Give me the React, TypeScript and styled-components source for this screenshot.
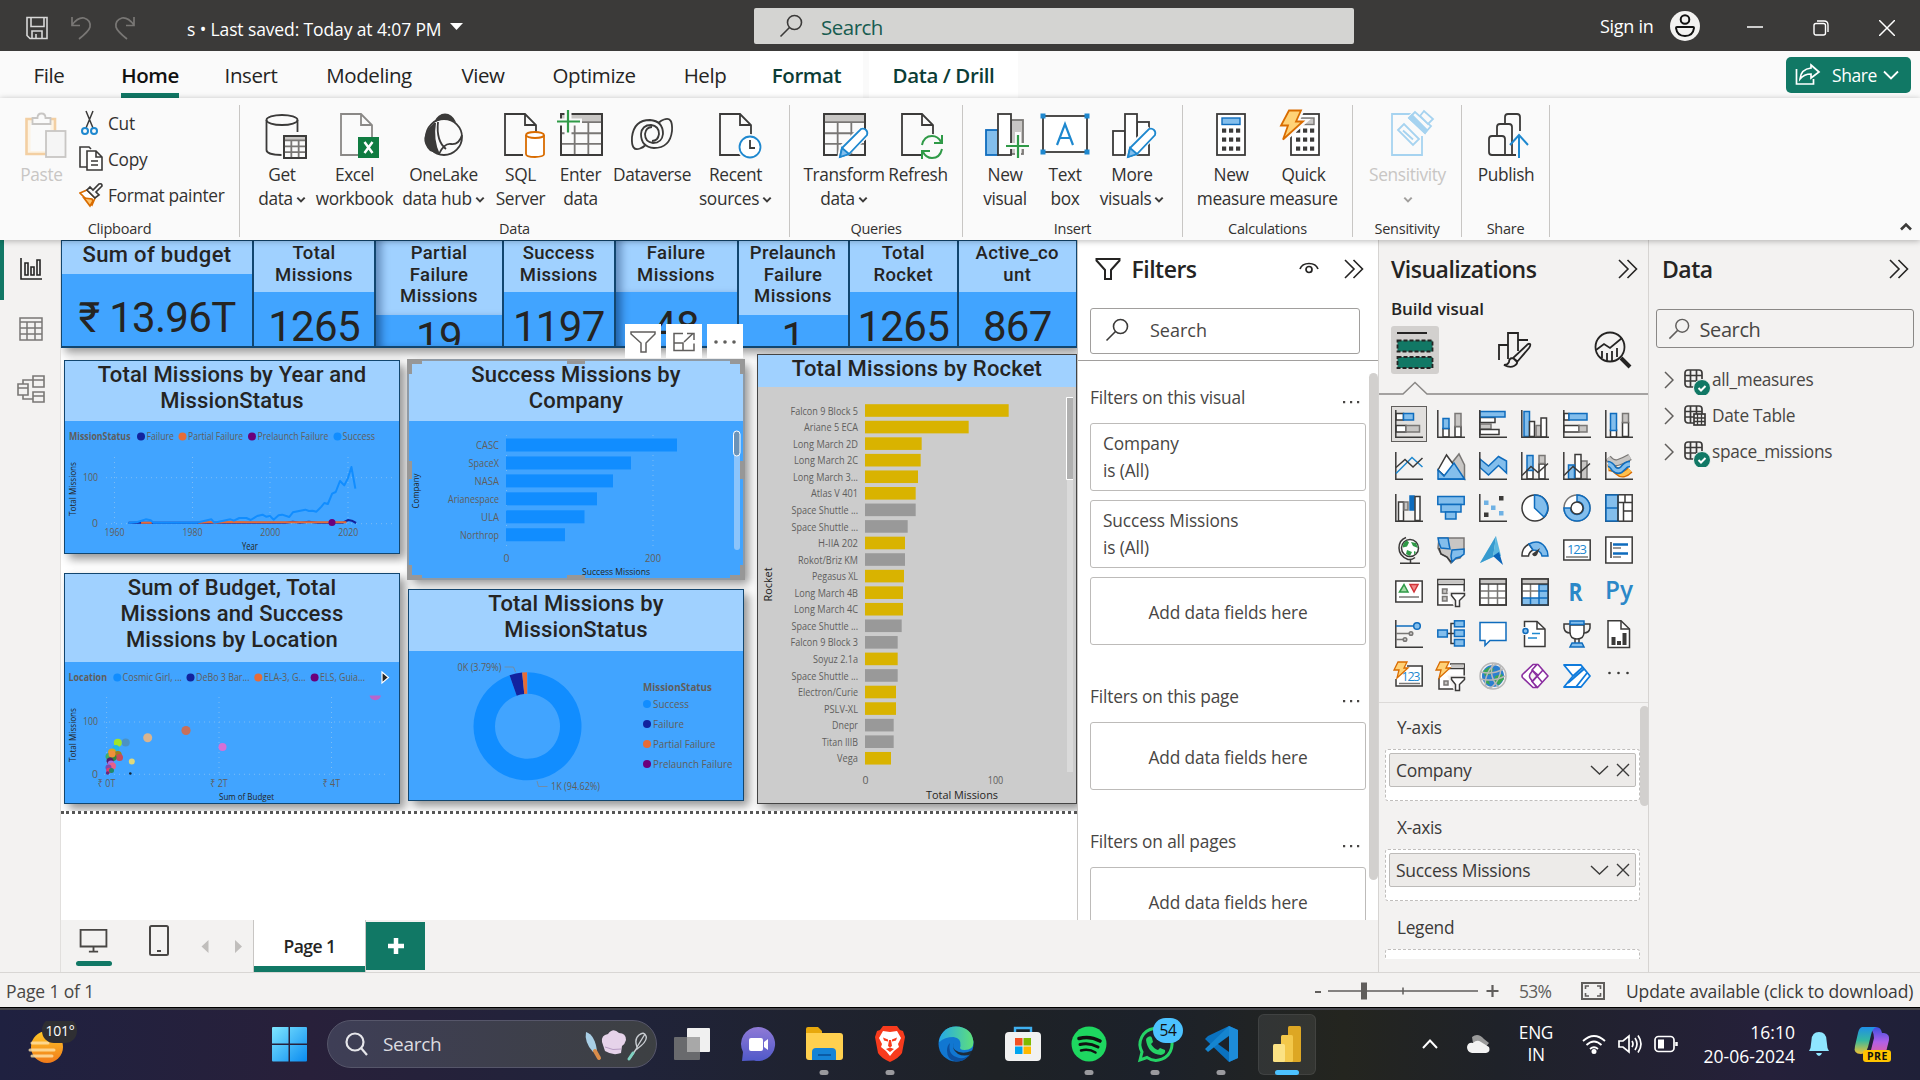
import React from "react";
import styled, { createGlobalStyle, css } from "styled-components";

const ui = `"Open Sans", "Noto Sans", sans-serif`;
const din = `Roboto, "Liberation Sans", sans-serif`;
const DK = "#3b3a39";
const BL = "#0f6cbd";
const LB = "#83beec";
const GR = "#797775";
const LG = "#c8c6c4";
const GREEN = "#117865";

const Global = createGlobalStyle`
  * { box-sizing: border-box; }
  html, body { margin: 0; padding: 0; overflow: hidden; background: #f3f2f1; }
  body { font-family: ${ui}; color: #323130; font-stretch: 92%; }
  svg { display: block; flex: none; }
`;

const Screen = styled.div`
  width: 1920px; height: 1080px; display: flex; flex-direction: column; overflow: hidden; background: #f3f2f1;
`;

/* ---------- title bar ---------- */
const TitleBar = styled.header`
  height: 51px; flex: none; background: #3b3a39; display: flex; align-items: center; color: #fff;
`;
const TitleLeft = styled.div`
  width: 754px; display: flex; align-items: center; padding: 4px 0 0 25px; font-size: 17.5px; letter-spacing: -0.12px; white-space: pre;
`;
const TitleText = styled.span`padding-top: 3px;`;
const QuickIcons = styled.div`display: flex; gap: 20px; width: 162px;`;
const TitleSearch = styled.div`
  width: 600px; height: 36px; background: #d4d4d2; border-radius: 2px; display: flex; align-items: center;
  padding-left: 25px; gap: 18px; color: #185c50; font-size: 20.5px; letter-spacing: -0.5px;
  span { padding-top: 2px; }
`;
const TitleRight = styled.div`
  flex: 1; display: flex; align-items: center; padding-left: 246px; font-size: 18px; letter-spacing: -0.3px;
`;
const SignIn = styled.span`width: 70px;`;
const WinButtons = styled.div`display: flex; gap: 50px; padding: 4px 0 0 47px;`;

/* ---------- ribbon ---------- */
const Tabs = styled.nav`
  height: 47px; flex: none; background: #fafafa; display: flex; position: relative; font-size: 20.5px; letter-spacing: -0.4px; color: #252423;
`;
const Tab = styled.div<{ $w: number; $on?: boolean; $ctx?: boolean; $gap?: number }>`
  width: ${p => p.$w}px; margin-left: ${p => p.$gap || 0}px; display: flex; justify-content: center; height: 47px; line-height: 48px; white-space: nowrap;
  ${p => p.$on && css`font-weight: 600; color: #111; span { border-bottom: 5px solid ${GREEN}; }`}
  ${p => p.$ctx && css`font-weight: 600; color: #0b3d36; background: #fff;`}
`;
const ShareButton = styled.div`
  margin: 6px 9px 5px auto; width: 125px; height: 36px; background: ${GREEN}; color: #fff; border-radius: 5px;
  display: flex; align-items: center; font-size: 17.5px; padding-left: 9px; gap: 11px;
  svg:last-child { margin-left: -5px; }
`;
const RibbonBar = styled.div`
  height: 142px; flex: none; background: #fafafa; display: flex; position: relative; z-index: 5; box-shadow: 0 1px 6px rgba(0,0,0,.28);
`;
const Group = styled.section<{ $w: number }>`
  width: ${p => p.$w}px; height: 132px; margin-top: 7px; border-right: 1px solid #c8c6c4; display: flex; flex-direction: column;
`;
const Items = styled.div<{ $pl: number }>`display: flex; flex: none; height: 114px; padding-left: ${p => p.$pl}px;`;
const GroupName = styled.div`flex: none; font-size: 14.5px; letter-spacing: -0.25px; line-height: 20px; text-align: center; color: #323130;`;
const Big = styled.div<{ $w: number; $off?: boolean }>`
  width: ${p => p.$w}px; flex: none; padding-top: 3px; display: flex; flex-direction: column; align-items: center;
  font-size: 17.3px; line-height: 24px; letter-spacing: -0.35px; white-space: nowrap; color: ${p => (p.$off ? "#c8c6c4" : "#323130")};
  svg.i { margin-bottom: 3px; }
`;
const Line2 = styled.div`display: flex; align-items: center; gap: 3px; height: 24px;`;
const ClipActions = styled.div`display: flex; flex-direction: column; margin-left: -2px;`;
const ClipAction = styled.div`
  display: flex; align-items: center; height: 36px; gap: 5px; font-size: 17.3px; letter-spacing: -0.3px; white-space: nowrap;
`;
const Collapse = styled.div`margin: 124px 8px 0 auto;`;

/* ---------- workspace ---------- */
const Work = styled.main`height: 732px; flex: none; display: flex;`;
const Rail = styled.aside`width: 61px; flex: none; border-right: 1px solid #e1dfdd; background: #f3f2f1;`;
const RailItem = styled.div<{ $on?: boolean }>`
  height: 60px; display: flex; align-items: center; justify-content: center; border-left: 4px solid ${p => (p.$on ? GREEN : "transparent")}; padding: 0 2px 2px 0;
`;
const Center = styled.div`width: 1317px; flex: none; display: flex; flex-direction: column;`;
const CanvasRow = styled.div`height: 680px; display: flex;`;
const Canvas = styled.div`width: 1016px; height: 680px; background: #fff; overflow: hidden; position: relative;`;
const ReportPage = styled.div`height: 574px; border-bottom: 3px dotted #555; overflow: hidden; background: #fff;`;
const KpiRow = styled.div`height: 108px; display: flex; position: relative; box-shadow: 4px 5px 9px rgba(0,0,0,.4);`;
const KpiCard = styled.div<{ $w: number; $sh?: boolean }>`
  width: ${p => p.$w}px; flex: none; border: solid #12466f; border-width: 1px 1px 2px 1px; background: #41a4ff; text-align: center;
  font-family: ${din}; color: #252423; ${p => p.$sh && css`box-shadow: inset 9px 0 9px -4px rgba(0,30,80,.5);`}
`;
const KpiTitle = styled.div<{ $h: number; $s?: number; $sh?: boolean }>`
  height: ${p => p.$h}px; background: #a0d1ff; font-weight: 500; font-size: ${p => p.$s || 18.5}px; line-height: 21.5px; letter-spacing: .35px; white-space: pre-line; padding-top: ${p => (p.$s ? 3 : 2)}px;
  ${p => p.$sh && css`box-shadow: inset 9px 0 9px -4px rgba(0,30,80,.4);`}
`;
const KpiValue = styled.div<{ $clip?: boolean; $t: number }>`
  font-size: 42px; line-height: 42px; letter-spacing: -0.7px; white-space: nowrap; padding-top: ${p => p.$t}px;
  ${p => p.$clip && css`height: 30px; overflow: hidden;`}
`;
const Board = styled.div`display: flex; padding: 6px 0 0 3px;`;
const Column = styled.div<{ $w: number; $ml?: number; $pt?: number; $gap?: number }>`
  width: ${p => p.$w}px; flex: none; margin-left: ${p => p.$ml || 0}px; padding-top: ${p => p.$pt || 0}px; display: flex; flex-direction: column; gap: ${p => p.$gap || 0}px;
`;
const Visual = styled.div<{ $h: number; $gray?: boolean; $sel?: boolean }>`
  height: ${p => p.$h}px; flex: none; position: relative; background: ${p => (p.$gray ? "#cccccc" : "#41a4ff")};
  outline: ${p => (p.$sel ? "2px solid #8f9aa5" : `1px solid ${p.$gray ? "#444" : "#12466f"}`)}; outline-offset: -1px;
  box-shadow: 5px 5px 9px rgba(0,0,0,.42);
`;
const VisualTitle = styled.div<{ $h: number }>`
  height: ${p => p.$h}px; background: #a0d1ff; text-align: center; font: 500 22px/26.2px ${din}; letter-spacing: .18px; color: #252423; white-space: pre-line;
  padding-top: 1px; border: 1px solid #6d9dc9; border-bottom: 0;
`;
const Handle = styled.i<{ $x: string; $y: string; $w: number; $h: number }>`
  position: absolute; ${p => p.$x}; ${p => p.$y}; width: ${p => p.$w}px; height: ${p => p.$h}px; background: #979797;
`;
const Corner = styled.i<{ $r: number; $x: string; $y: string }>`
  position: absolute; ${p => p.$x}; ${p => p.$y}; width: 15px; height: 15px; border: solid #979797; border-width: 5px 0 0 5px; transform: rotate(${p => p.$r}deg);
`;
const HoverBar = styled.div`position: absolute; left: 564px; top: 84px; display: flex; gap: 5px; z-index: 3;`;
const HoverButton = styled.div`width: 36px; height: 34px; background: #fff; display: flex; align-items: center; justify-content: center; padding: 2px 1px 0 0;`;

/* ---------- page tabs ---------- */
const PageTabs = styled.div`height: 52px; background: #f3f2f1; display: flex; position: relative;`;
const ViewToggle = styled.div<{ $w: number; $gap: number }>`
  width: ${p => p.$w}px; display: flex; flex-direction: column; align-items: center; height: 52px; justify-content: flex-end; padding: 0 0 6px 0; gap: ${p => p.$gap}px;
`;
const Underline = styled.div<{ $on?: boolean }>`width: 36px; height: 5px; border-radius: 3px; background: ${p => (p.$on ? GREEN : "transparent")};`;
const PageTab = styled.div`
  width: 113px; height: 52px; background: #fff; border: solid #c8c6c4; border-width: 0 1px; box-shadow: inset 0 -6px 0 ${GREEN}; text-align: center; font-weight: 600;
  font-size: 17.5px; letter-spacing: -0.5px; line-height: 53px; color: #252423;
`;
const AddPage = styled.div`width: 59px; height: 48px; margin-top: 2px; background: ${GREEN}; display: flex; align-items: center; justify-content: center;`;

/* ---------- filters ---------- */
const Filters = styled.aside`width: 301px; height: 680px; border-left: 1px solid #c8c6c4; background: #fff; display: flex; flex-direction: column; overflow: hidden;`;
const PaneHead = styled.div`display: flex; align-items: center; font-size: 23px; font-weight: 600; letter-spacing: -0.5px; color: #252423; padding-bottom: 1.5px !important;`;
const FiltersHead = styled(PaneHead)`height: 60px; padding: 0 14px 0 17px; gap: 10.5px;`;
const Push = styled.span`margin-left: auto; display: flex; gap: 25px;`;
const SearchBox = styled.div<{ $w: number; $h: number }>`
  width: ${p => p.$w}px; height: ${p => p.$h}px; border: 1.5px solid #8a8886; border-radius: 3px; display: flex; align-items: center; color: #484644; font-weight: 400;
`;
const FilterSearch = styled(SearchBox)`margin: 8px 0 6px 12px; padding: 0 0 2px 14px; gap: 21px; font-size: 18px; border-color: #a19f9d;`;
const FilterBody = styled.div`border-top: 1px solid #a19f9d; flex: 1; display: flex; min-height: 0;`;
const FilterList = styled.div`width: 276px; margin-left: 12px; flex: none;`;
const FilterName = styled.div<{ $t: number }>`
  padding-top: ${p => p.$t}px; line-height: 24px; height: ${p => p.$t + 37}px; display: flex; justify-content: space-between; padding-right: 6px; font-size: 17.3px; letter-spacing: -0.15px; color: #484644;
`;
const FilterCard = styled.div<{ $center?: boolean }>`
  height: 68px; margin-bottom: 9px; border: 1px solid #bdbbb9; border-radius: 3px; font-size: 17.3px; letter-spacing: -0.12px; line-height: 27px; color: #484644; white-space: pre-line;
  ${p => (p.$center ? css`display: flex; align-items: center; justify-content: center; padding-top: 2px;` : css`padding: 5.5px 12px;`)}
`;
const VScroll = styled.div<{ $h: number; $mt: number }>`
  width: 9px; height: ${p => p.$h}px; margin: ${p => p.$mt}px 0 0 auto; border-radius: 5px; background: #d2d0ce; flex: none;
`;

/* ---------- visualizations ---------- */
const Viz = styled.aside`width: 271px; height: 732px; border-left: 1px solid #d6d4d2; border-right: 1px solid #d6d4d2; flex: none; display: flex; flex-direction: column; overflow: hidden;`;
const VizHead = styled(PaneHead)`height: 60px; padding: 0 10px 0 12px; justify-content: space-between; flex: none;`;
const BuildVisual = styled.div`height: 26px; flex: none; line-height: 17px; padding-left: 12px; font-weight: 600; font-size: 17px; letter-spacing: -0.1px; color: #252423;`;
const VizModes = styled.div`display: flex; padding-left: 12px; height: 48px; gap: 52px; flex: none;`;
const VizMode = styled.div<{ $on?: boolean }>`
  width: 48px; height: 48px; border-radius: 3px; background: ${p => (p.$on ? "#d2d0ce" : "none")}; display: flex; align-items: center; justify-content: center;
  &:last-child { margin-left: -2px; }
`;
const VizGrid = styled.div`display: grid; grid-template-columns: repeat(6, 42px); grid-auto-rows: 42px; padding-left: 8.5px; margin-top: 7px; height: 300px; flex: none; border-bottom: 1px solid #dcdad8;`;
const VizCell = styled.div<{ $on?: boolean }>`
  width: 36px; height: 36px; margin: 3px; display: flex; align-items: center; justify-content: center;
  ${p => p.$on && css`background: #e1dfdd; box-shadow: 0 0 0 1px #605e5c inset;`}
`;
const Wells = styled.div`display: flex; height: 256px; overflow: hidden;`;
const WellList = styled.div`width: 255px; margin-left: 6px; flex: none;`;
const WellName = styled.div`height: 46px; line-height: 50px; padding-left: 12px; font-size: 17.3px; letter-spacing: -0.3px; color: #3b3a39;`;
const Well = styled.div`height: 52px; margin-bottom: 2px; border: 1px dashed #c0bebc; background: #fff; padding: 3px; border-radius: 3px;`;
const Chip = styled.div`
  height: 34px; width: 247px; border: 1px solid #bdbbb9; border-radius: 2px; background: #edebe9; display: flex; align-items: center; padding: 0 5px 1px 6px; font-size: 17.5px; letter-spacing: -0.3px; white-space: nowrap; color: #3b3a39;
  span { flex: 1; } gap: 8px;
`;

/* ---------- data ---------- */
const Data = styled.aside`flex: 1; height: 732px;`;
const DataHead = styled(PaneHead)`height: 60px; padding: 0 11px 0 13px; justify-content: space-between;`;
const DataSearch = styled(SearchBox)`margin: 8.5px 0 14.5px 6.5px; padding: 2px 0 0 11px; gap: 10px; font-size: 20px; letter-spacing: -0.4px;`;
const DataRow = styled.div`height: 36px; display: flex; align-items: center; padding-left: 15px; font-size: 17.3px; letter-spacing: -0.3px; color: #484644; gap: 8px; span { margin: -1px 0 0 -8px; }`;

/* ---------- status ---------- */
const Status = styled.footer`
  height: 36px; flex: none; border-top: 1px solid #d8d6d4; border-bottom: 1px solid #000; display: flex; align-items: center; font-size: 17.5px; letter-spacing: -0.15px; color: #484644; padding: 1.5px 6px 0 6px; white-space: nowrap;
`;
const ZoomArea = styled.div`margin-left: auto; display: flex; align-items: center; color: #605e5c;`;
const Percent = styled.span`width: 62px; margin-left: 20px; letter-spacing: -0.8px;`;
const Update = styled.span`margin-left: 21px; width: 288px; color: #3b3a39;`;

/* ---------- taskbar ---------- */
const TaskBar = styled.div`
  height: 72px; flex: none; display: flex; align-items: center; position: relative; border-top: 2px solid #46464c; padding-bottom: 2px;
  background: linear-gradient(90deg,#1f2140 0,#28203a 16%,#20233a 32%,#1e2226 52%,#1c212a 60%,#24251f 70%,#1f2229 78%,#25203a 92%,#1f2038);
  color: #fff; letter-spacing: -0.3px;
`;
const Weather = styled.div`width: 272px; padding-left: 26px;`;
const TaskSearch = styled.div`
  width: 330px; height: 48px; margin: 0 2px 0 20px; border-radius: 24px; border: 1px solid #56566a; background: linear-gradient(90deg,#3e3e56,#3d4043); display: flex; align-items: center;
  padding: 0 9px 0 17px; font-size: 19px; color: #dcdce0; span { flex: 1; padding-left: 15px; }
`;
const TaskIcon = styled.div<{ $run?: boolean; $on?: boolean }>`
  width: 66.1px; height: 70px; display: flex; align-items: center; justify-content: center; position: relative; flex: none;
  &::after { content: ""; position: absolute; bottom: 4px; left: 50%; height: 5px; width: ${p => (p.$on ? 24 : p.$run ? 9 : 0)}px; transform: translateX(-50%); border-radius: 3px; background: ${p => (p.$on ? "#4cc2ff" : "#9a9a9e")}; }
  ${p => p.$on && css`&::before { content: ""; position: absolute; inset: 5px 4px 4px; border-radius: 6px; background: rgba(255,255,255,.08); border: 1px solid rgba(255,255,255,.07); }`}
`;
const Tray = styled.div`display: flex; align-items: center; margin-left: auto; font-size: 17.5px; line-height: 24px; height: 70px;`;
const Lang = styled.div`width: 38px; margin: 0 27px 0 25px; text-align: center; line-height: 22.5px; font-size: 17.3px;`;
const Clock = styled.div`width: 112px; text-align: right; margin-left: 5px; margin-right: 1px; letter-spacing: 0.02px;`;

/* ---------- chart text ---------- */
const ChartText = styled.text`font-family: ${ui};`;
type TP = { x: number; y: number; s?: number; w?: number; a?: "start" | "middle" | "end"; f?: string; b?: boolean; r?: boolean; children: string };
const T = ({ x, y, s = 10.5, w, a = "start", f = "#605e5c", b, r, children }: TP) => (
  <ChartText x={x} y={y + s * 0.36} fontSize={s} textAnchor={a} fill={f} fontWeight={b ? 700 : 400} textLength={w} lengthAdjust="spacingAndGlyphs"
    transform={r ? `rotate(-90 ${x} ${y})` : undefined}>{children}</ChartText>
);

/* ---------- ribbon icons: x is measured from the icon's middle, y from the window's top ---------- */
const RI = ({ children }: { children: React.ReactNode }) => (
  <svg className="i" width="56" height="52" viewBox="-28 109 56 52" fill="none" stroke={DK} strokeWidth="1.8">{children}</svg>
);
const page = <path d="M6 156H-16V115H4L15 126V138M4 115V126H15" />;
const tableG = (x: number, y: number, w: number, h: number) => (
  <g>
    <rect x={x} y={y} width={w} height={h} fill="#fafafa" />
    <rect x={x + 1} y={y + 1} width={w - 2} height={h / 6} fill={LG} stroke="none" />
    <path stroke={GR} d={`M${x} ${y + h / 5}h${w}M${x} ${y + h * 0.47}h${w}M${x} ${y + h * 0.73}h${w}M${x + w / 3} ${y + h / 5}V${y + h}M${x + (w * 2) / 3} ${y + h / 5}V${y + h}`} />
    <rect x={x} y={y} width={w} height={h} />
  </g>
);
const pencil = (
  <g><path fill="#fff" stroke="#fafafa" strokeWidth="5" d="M-4 157l2-9L16 131l6 6-18 17z" /><path fill="#fff" stroke="#1e88cf" d="M-4 158l2-9L17 130q3-1 5 1t1 5L5 155z" /><path fill={LB} stroke="#1e88cf" d="M-4 158l2-9 7 6z" /></g>
);
const calc = (x: number, top: string, bolt?: boolean) => (
  <g>
    <rect x={x} y="115" width="28" height="41" fill="#fff" />
    <rect x={x + 5} y="119" width="18" height="6.5" fill={top} stroke={bolt ? GR : BL} strokeWidth="1.4" />
    {[0, 1, 2].map(r => [0, 1, 2].map(c => <rect key={`${r}${c}`} x={x + 5 + c * 7} y={129.5 + r * 9} width="4.2" height="4.2" fill={DK} stroke="none" />))}
  </g>
);
const ChevS = ({ c = DK }: { c?: string }) => <svg width="10" height="10" viewBox="0 0 10 10" fill="none" stroke={c} strokeWidth="2"><path d="M1.3 3.6L5 7.4l3.7-3.8" /></svg>;

const icons: Record<string, React.ReactNode> = {
  paste: <RI><path stroke="#f3cfa2" strokeWidth="2.6" fill="#fdf3e3" d="M-15.500 120H13V155H-15.500z" /><rect x="-11.500" y="124" width="20" height="28" fill="#fafafa" stroke="none" /><path fill="#fafafa" stroke={LG} d="M-9.500 125V119h5c0-6 8-6 8 0h5v6z" /><rect x="4" y="132" width="19.500" height="26" fill="#f5f5f5" stroke={LG} /></RI>,
  get: <RI><ellipse cx="0" cy="121" rx="15.5" ry="5" /><path d="M-15.500 121V151c0 3 6 5 15 5M15.500 121V133" /><rect x="0" y="134" width="26" height="27" fill="#fafafa" stroke="none" />{tableG(2, 137, 22, 22)}</RI>,
  excel: <RI><g stroke="#8a8886" transform="translate(2 0)">{page}</g><rect x="3" y="138" width="21" height="21" fill="#107c41" stroke="none" /><path stroke="#fff" strokeWidth="2.5" d="M9.5 143l8 11M17.5 143l-8 11" /></RI>,
  onelake: <RI><circle cx="0" cy="138" r="18" /><path fill={DK} stroke="none" d="M-10 123Q-6 114.500 1 114.500t11 8.500q-11-5-22 0zM-10 124q-17 15-4 28l10 3.500Q-11 141-8 124z" /><path d="M-6 123q-2 19 8 27M-5 155q5-11 12-10 8 1 11-9" /></RI>,
  sql: <RI>{page}<g stroke="#d96c00"><path stroke="#fafafa" strokeWidth="6" d="M5 137h17v20H5z" /><path fill="#fff" d="M5 136V155c0 4 18 4 18 0V136" /><ellipse cx="14" cy="136" rx="9" ry="3" fill="#fff" /></g></RI>,
  enter: <RI>{tableG(-20, 115, 41, 41)}<path stroke="#fafafa" strokeWidth="7" d="M-13 110v26M-26 123h27" /><path stroke="#2f9a47" strokeWidth="2.2" d="M-13 111v22.5M-24 122.500H-1" /></RI>,
  dataverse: <RI><g transform="translate(0 135)"><path d="M-12 14.500Q-21 18-20 3-18-14-2-14 11-13 11 0 10 9 1 9-7 8-7 0-6-7 0-7" /><path d="M12-14.500Q21-18 20-3 18 14 2 14-11 13-11 0-10-9-1-9 7-8 7 0 6 7 0 7" /><path d="M-12 14.500q3-1 5-3M12-14.500q-3 1-5 3" /></g></RI>,
  recent: <RI>{page}<circle cx="14" cy="148" r="10.500" fill="#fff" stroke="#fafafa" strokeWidth="5" /><circle cx="14" cy="148" r="10.500" fill="#fff" stroke="#1e88cf" /><path d="M14 141v8h5" /></RI>,
  transform: <RI>{tableG(-20, 115, 41, 41)}{pencil}</RI>,
  refresh: <RI>{page}<circle cx="14" cy="148" r="13" fill="#fafafa" stroke="none" /><path stroke="#2f9a47" strokeWidth="2" d="M4 146q2-9 10-9 6 0 9 6M24 136v8h-8M24 150q-2 9-10 9-6 0-9-6M4 160v-8h8" /></RI>,
  newvisual: <RI><rect x="6" y="121" width="12" height="34" fill={LG} stroke={GR} /><rect x="-19" y="131" width="12" height="25" fill={LB} stroke={BL} /><rect x="-7" y="115" width="13" height="41" fill="#fff" /><path stroke="#fafafa" strokeWidth="6" d="M13 133v27M1 147h25" /><path stroke="#2f9a47" strokeWidth="2.200" d="M13 136v23M1 147h23" /></RI>,
  textbox: <RI><rect x="-22" y="117" width="44" height="36" fill="#fff" />{[[-22, 117], [22, 117], [-22, 153], [22, 153]].map(([x, y]) => <rect key={`${x}${y}`} x={x - 2.5} y={y - 2.5} width="5" height="5" fill="#1e88cf" stroke="none" />)}<path stroke="#1e88cf" strokeWidth="2.200" d="M-8 146L0 125l8 21M-5 139H5" /></RI>,
  morevis: <RI><rect x="-19" y="132" width="12" height="24" fill="#fff" /><rect x="5" y="123" width="12" height="33" fill="#fff" /><rect x="-7" y="115" width="12" height="41" fill="#fff" />{pencil}</RI>,
  newmeasure: <RI>{calc(-14, LB)}</RI>,
  quick: <RI>{calc(-13, LG, true)}<path stroke="#fafafa" strokeWidth="6" fill="#fafafa" d="M-15 112h12l-5 11h7l-19 17 4-13h-7z" /><path fill="#ffd277" stroke="#d96c00" d="M-15 111.500h12l-5 11h7l-20 18 5-14h-7z" /></RI>,
  sens: <RI><g stroke="#a6d3f0"><path d="M6 115H-16V156H14V137" /><path fill="#fafafa" stroke="#fafafa" strokeWidth="4" d="M1 119l7-7 16 16-7 7z" /><path fill="#fafafa" d="M-10 131l6-6 15 15-6 6zM-5 131.500l10 9" /><path fill="#fafafa" d="M1 119l6-6 16 14-6 7z" /><path fill="#a6d3f0" d="M1 119l3-3 15 15-2 3z" /><path fill="#fafafa" d="M12 117l4-5 9 8-5 5z" /></g></RI>,
  publish: <RI><path strokeLinejoin="round" d="M11 156H-14q-3 0-3-3V140q0-3 3-3H-4q3 0 3 3v16M-9 137V128q0-3 3-3H3q3 0 3 3v28M-1 125V118q0-3 3-3H11q3 0 3 3v14" /><path stroke="#fafafa" strokeWidth="6" d="M13 137v20" /><path stroke="#1e88cf" strokeWidth="2" d="M13 159V136M4 146l9-10 9 10" /></RI>,
};

type RibbonItem = [string, number, string, string, boolean?];
const ribbon: { name: string; w: number; pl: number; items: RibbonItem[] }[] = [
  { name: "Data", w: 550, pl: 10, items: [["get", 64, "Get", "data", true], ["excel", 81, "Excel", "workbook"], ["onelake", 97, "OneLake", "data hub", true], ["sql", 57, "SQL", "Server"], ["enter", 63, "Enter", "data"], ["dataverse", 80, "Dataverse", ""], ["recent", 87, "Recent", "sources", true]] },
  { name: "Queries", w: 173, pl: 11, items: [["transform", 86, "Transform", "data", true], ["refresh", 62, "Refresh", ""]] },
  { name: "Insert", w: 220, pl: 15, items: [["newvisual", 54, "New", "visual"], ["textbox", 66, "Text", "box"], ["morevis", 68, "More", "visuals", true]] },
  { name: "Calculations", w: 170, pl: 12, items: [["newmeasure", 72, "New", "measure"], ["quick", 73, "Quick", "measure"]] },
  { name: "Sensitivity", w: 109, pl: 0, items: [["sens", 109, "Sensitivity", "", true]] },
  { name: "Share", w: 88, pl: 0, items: [["publish", 88, "Publish", ""]] },
];

/* ---------- visual gallery icons, 28 x 28 ---------- */
const ax = <path d="M.8 0V27.200H28" />;
const R = (x: number, y: number, w: number, h: number, k: "b" | "w" | "g") => (
  <rect key={`${x},${y}`} x={x} y={y} width={w} height={h} fill={k === "b" ? LB : k === "g" ? LG : "#fff"} stroke={k === "b" ? BL : k === "g" ? GR : DK} />
);
const bolt = <path fill="#ffd277" stroke="#d96c00" strokeWidth="1.300" d="M3 0h9L9 6h4L2 16l2-8H-1z" />;
const funnelW = <path fill="#fff" stroke={DK} d="M14.500 15.500h13v2l-5 5v6h-4v-6l-4-5z" />;
const gallery: React.ReactNode[] = [
  <>{R(1, 3.5, 7.5, 6.5, "w")}{R(8.5, 3.5, 10, 6.5, "b")}{R(1, 15.5, 10, 6.5, "w")}{R(11, 15.5, 13.5, 6.5, "g")}{ax}</>,
  <>{R(6, 18.500, 6, 8.5, "w")}{R(6, 8.5, 6, 10, "b")}{R(18, 16.5, 6, 10.500, "w")}{R(18, 3.5, 6, 13, "g")}{ax}</>,
  <>{R(1, 7.5, 15, 5, "w")}{R(1, 14, 11, 5, "g")}{R(1, 19.500, 19, 5, "w")}{R(1, 1.5, 25, 5.500, "b")}{ax}</>,
  <>{R(3, 1.5, 5.500, 25, "b")}{R(8.500, 11.500, 5, 15, "w")}{R(15, 15.500, 5, 11, "g")}{R(20, 8, 5.500, 19, "w")}{ax}</>,
  <>{R(1, 3.500, 5, 6.500, "w")}{R(6, 3.500, 18, 6.500, "b")}{R(1, 15.500, 15, 6.500, "w")}{R(16, 15.500, 8, 6.500, "g")}{ax}</>,
  <>{R(5.500, 20, 6, 7, "w")}{R(5.500, 3.500, 6, 17, "b")}{R(17.500, 12.500, 6, 14, "w")}{R(17.500, 3.500, 6, 9, "g")}{ax}</>,
  <>{ax}<path stroke="#1e88cf" d="M1 21.500L17 5.500 27.500 15" /><path d="M1 15.500L10 7.500 18 15 27.500 6" /></>,
  <><path fill={LG} stroke={GR} d="M14 12l8-10 5.500 11V27z" /><path fill="#fff" d="M1 18L9.500 3l8 11-10 10z" /><path fill={LB} stroke={BL} d="M1 18l6 6L17 11l10.500 16H1z" /><path d="M.8 27.200H28" stroke={BL} /></>,
  <><path fill={LB} stroke={BL} d="M1 7l8.500 7 10-9.500 8 4.500V21l-8-7.500L9.500 23 1 15.500z" />{ax}</>,
  <>{R(6, 18, 6, 9, "w")}{R(6, 3.500, 6, 15, "b")}{R(18, 12, 6, 15, "w")}{R(18, 3.500, 6, 8, "g")}{ax}<path d="M1 23.500L10 14.500l7 6 10-9" /></>,
  <>{R(18, 9, 6, 18, "g")}{R(12, 2.500, 6, 24, "w")}{R(5.500, 13, 6, 14, "b")}{ax}<path d="M1 23.500L10 14.500l7 6 10-9" /></>,
  <><path stroke="#d96c00" strokeWidth="7" d="M3 16q5-1 10 4t12-2" /><path stroke="#ffc04d" strokeWidth="4" d="M3 16q5-1 10 4t12-2" /><path stroke={GR} strokeWidth="7" d="M3 6q5 6 10 4.500T25 5" /><path stroke={LG} strokeWidth="4.500" d="M3 6q5 6 10 4.500T25 5" /><path stroke={BL} strokeWidth="6.500" d="M3 12q3 0 6 5 5 4 9-1 3-4 7-4" /><path stroke={LB} strokeWidth="3.400" d="M3 12q3 0 6 5 5 4 9-1 3-4 7-4" />{ax}</>,
  <>{R(3.500, 8, 5, 19, "w")}{R(9, 8, 4, 8, "g")}<rect x="15" y="2" width="4" height="14" fill={BL} stroke={BL} />{R(20, 2.500, 5, 24, "w")}{ax}</>,
  <>{R(.8, 2.500, 26.400, 8, "b")}{R(4, 10.500, 20, 7.500, "b")}{R(8.500, 18, 10.500, 7, "b")}</>,
  <>{ax}<g stroke="none"><path fill={DK} d="M20 2h4.500v4.500H20zM5 18.500h4.500V23H5z" /><path fill="#6fb1e4" d="M5 6.500h4.500V11H5zM12 11.500h4.500V16H12zM20 17h4.500v4.500H20z" /></g></>,
  <><circle cx="14" cy="14" r="13" fill="#fff" /><path fill={LB} stroke={BL} d="M13.500 1A13 13 0 0123 23l-9.500-9z" /></>,
  <><circle cx="14" cy="14" r="13" fill="#fff" stroke={GR} /><path fill={LB} stroke={BL} d="M14 1A13 13 0 111 14h6.500A6.500 6.500 0 1014 7.500z" /><circle cx="14" cy="14" r="6" fill="#fff" /></>,
  <><rect x=".8" y=".8" width="26.400" height="26.400" fill="#fff" /><path fill={LB} stroke={BL} d="M1 1h12v26H1zM1 14h12" /><path d="M13 8.500h14M18.500 8.500V27M18.500 17H27M13 1v26M20 1v7" /></>,
  <><circle cx="15" cy="12" r="8.500" fill="#fff" /><path fill="#2f9a47" stroke="none" d="M12 4.500q-5 3-4 7l4-1 2-4zM16 6l5 1 2 5-5-2zM12 14l5 2-2 4-4-2zM19 15l2 1-2 3z" /><path d="M11 1.500Q4 4 4 12t9 11.500q4 .5 7-2M15.500 23.500V27M5 27.200h20" /></>,
  <><path fill={LG} stroke={GR} d="M2 2h25v14l-4 6-5 1-4 4-4-6-6-3-3-6z" /><path fill={LB} stroke={BL} d="M1 2h10l1 6 1 5-9-1-2-5zM15 14l12-1v5l-4 3-4 1-4 4-1-6z" /><path d="M2 12l2 6 6 3 4 5" /></>,
  <g stroke="none"><path fill="#4bb1de" d="M17 0L1 27l13-6z" /><path fill="#2a8cc4" d="M17 0l-3 21-13 6z" opacity=".6" /><path fill="#5cb8e0" d="M17 0l-3 21 8-1z" /><path fill="#0b63b8" d="M14 20l10 9-4-13z" /></g>,
  <><path fill="#fff" d="M1 20A13 13 0 018 8l4 6q-4 2-4.500 6z" /><path fill={LB} stroke={BL} d="M8 8q10-5 16 3 3 4 3 9h-6q-1-6-9-6z" /><path fill={DK} stroke="none" d="M11 18l8-6-3 7q-3 3-5-1z" /></>,
  <><rect x=".8" y="4" width="26.400" height="20" fill="#fff" /><text x="14" y="17.500" textAnchor="middle" fontSize="13" stroke="none" fill="#1e88cf" fontFamily="Open Sans" textLength="20">123</text><path d="M3 21h22" stroke={GR} /></>,
  <><rect x=".8" y="1" width="26.400" height="26" fill="#fff" /><path d="M6 6v16" /><path stroke={BL} strokeWidth="2.400" d="M8 8.500h15M8 17.500h15" /><path stroke={GR} d="M8 12h8M8 21h8" /></>,
  <><rect x=".8" y="3" width="26.400" height="21" fill="#fff" /><path fill="#a6dba8" stroke="#2f9a47" d="M4.500 14L9 6.500l4 7.500z" /><path fill="#f28b8b" stroke="#d13438" d="M15 6.500h8L19 14z" /><path stroke={GR} d="M4 19h20" /></>,
  <><rect x=".8" y="1.500" width="26.400" height="25.500" fill="#fff" /><path d="M1 6.500h26" /><rect x="1.500" y="2.500" width="25" height="3" fill={LG} stroke="none" />{R(5.500, 11, 4.500, 4.500, "g")}{R(5.500, 18.500, 4.500, 4.500, "g")}<path stroke="#f3f2f1" strokeWidth="5" d="M14 16h13v11h-8z" />{funnelW}</>,
  <><rect x=".8" y="1" width="26.400" height="26" fill="#fff" /><path stroke={GR} d="M1 13h26M1 20h26M9.500 6v21M18.500 6v21" /><rect x="1.500" y="1.500" width="25" height="4" fill={LG} stroke="none" /><path d="M1 6h26M.8 1h26.400v26H.8z" /></>,
  <><rect x=".8" y="1" width="26.400" height="26" fill="#fff" /><path stroke={GR} d="M1 13h17M9.500 6v14" /><path fill={LB} stroke={BL} d="M18 6.500h9V27H1v-7h17zM18 13h9M9.500 20v7M18 20v7M18 20h9" /><rect x="1.500" y="1.500" width="25" height="4" fill={LG} stroke="none" /><path d="M1 6h26M.8 1h26.400v26H.8z" /></>,
  <text x="12.500" y="23" textAnchor="middle" fontSize="25" fontWeight="700" stroke="none" fill="#2b88c8" fontFamily="Open Sans" textLength="14" lengthAdjust="spacingAndGlyphs">R</text>,
  <text x="14" y="20.500" textAnchor="middle" fontSize="26" fontWeight="600" stroke="none" fill="#2b88c8" fontFamily="Open Sans" textLength="28" lengthAdjust="spacingAndGlyphs">Py</text>,
  <>{ax}<path stroke={BL} d="M1 6h18" /><circle cx="22" cy="6" r="3.300" fill={LB} stroke={BL} /><path stroke={GR} d="M1 13.500h13M1 19.500h7" /><circle cx="16" cy="13.500" r="1.800" fill={LG} stroke={GR} /><circle cx="10" cy="19.500" r="1.800" fill={LG} stroke={GR} /></>,
  <><path d="M10 13.500h7M22 3.500h-8v20h8" />{R(.8, 10, 9.500, 7, "b")}{R(17.500, .8, 9.700, 6, "b")}{R(17.500, 10, 9.700, 6.500, "b")}{R(17.500, 19.500, 9.700, 6.500, "b")}</>,
  <path stroke={BL} fill="#fff" d="M1 2.500h26v18H11l-5 5v-5H1z" />,
  <><path fill="#fff" d="M3.500 7V1.500H16L24 9v17.500H3.500V15" /><path d="M16 1.500V9h8" /><circle cx="4.500" cy="11" r="2.500" fill={LB} stroke={BL} /><path stroke="#1e88cf" d="M11 13.500h8M7 18h9" /></>,
  <><path fill="#fff" d="M7 5v7q0 7 7 7t7-7V5z" /><path d="M7 4H1v4q1 5 6 5M21 4h6v4q-1 5-6 5M12 19v4M16 19v4" /><path fill={LB} stroke={BL} d="M7 1h14v3.500H7zM9 23h10l2 4H7z" /></>,
  <><path fill="#fff" d="M3 .8h13L24.500 9v18.500H3z" /><path d="M16 1v8h8.500" /><path fill={DK} stroke="none" d="M6.500 17h4v8h-4zM12 21h4v4h-4zM17.500 13h4v12h-4z" /></>,
  <><path fill="#fff" d="M12 4h15.200v20H1V17" /><text x="16" y="19" textAnchor="middle" fontSize="12.500" stroke="none" fill="#1e88cf" fontFamily="Open Sans" textLength="19">123</text><path d="M4 21.500h21" stroke={GR} />{bolt}</>,
  <><path fill="#fff" d="M13 2h14.200v25H2V16" /><path d="M12 6.500h15" /><rect x="14" y="2.500" width="13" height="3" fill={LG} stroke="none" />{R(7, 19, 4, 4, "g")}<path stroke="#f3f2f1" strokeWidth="5" d="M14 16h13v11h-8z" />{funnelW}{bolt}</>,
  <><circle cx="14" cy="14" r="11" fill="#2b7fd0" stroke="none" /><path fill="#3aa655" stroke="none" d="M4 9l6-4 5 2-3 5-6 2zM16 14l7-2 2 5-5 6-5-3zM6 17l4 2 1 4-4-2z" /><g stroke="#b8b8b8" strokeWidth="1.500"><circle cx="14" cy="14" r="13" /><ellipse cx="14" cy="14" rx="6" ry="13" transform="rotate(25 14 14)" /><path d="M2 10q12 3 22-3M1 17q14 3 25-3M14 1q-5 13 6 25" /></g></>,
  <g stroke="#8a2ea0" strokeWidth="1.600" strokeLinejoin="round" fill="#fff"><path d="M12 2.500h4L9 12q-1 2 0 4l7 9.500h-4L1.500 15.500q-1-1.500 0-3z" /><path d="M16 2.500h1L27 14 16.500 25.500 11 19.500l6-6.500-6-5z" /><path d="M11 8l10 12M22 8L11 20" /></g>,
  <g stroke="#0f7bdc" strokeWidth="1.800" strokeLinejoin="round" fill="#fff"><path d="M1 3h17l9 11-9 11H1l9-11z" /><path d="M10 14L20 5M5 21l16-14M13 25l11-14" /></g>,
  <g stroke="none" fill={DK}><circle cx="4.500" cy="11" r="1.300" /><circle cx="13.500" cy="11" r="1.300" /><circle cx="22.500" cy="11" r="1.300" /></g>,
];

/* ---------- common glyphs ---------- */
const Lens = ({ s = 24, c = DK }: { s?: number; c?: string }) => (
  <svg width={s} height={s} viewBox="0 0 24 24" fill="none" stroke={c} strokeWidth="1.600"><circle cx="15.500" cy="8.500" r="7" /><path d="M10.500 13.500L1.500 22.500" /></svg>
);
const Collapse2 = () => <svg width="20" height="20" viewBox="0 0 20 20" fill="none" stroke="#252423" strokeWidth="1.600"><path d="M1 1l9 9-9 9M9.500 1l9 9-9 9" /></svg>;
const Dots3 = () => <svg width="17" height="24" viewBox="0 0 17 24" fill="#484644"><path d="M0 15h2.200v2.200H0zM7 15h2.200v2.200H7zM14 15h2.200v2.200H14z" /></svg>;
const ChipGlyphs = () => (
  <svg width="40" height="16" viewBox="0 0 40 16" fill="none" stroke={DK} strokeWidth="1.400"><path d="M1 4l8.500 8L18 4M27 2l12 12M39 2L27 14" /></svg>
);
const TableGlyph = ({ kind }: { kind: "check" | "calendar" }) => (
  <svg width="30" height="30" viewBox="0 0 30 30" fill="none" stroke={DK} strokeWidth="1.700">
    <rect x="3" y="5" width="17" height="17" rx="3" /><path d="M3 10.500h17M3 16h17M8.500 5v17M14.500 5v17" />
    {kind === "check" ? <g><circle cx="20" cy="23" r="8.500" fill={GREEN} stroke="#f3f2f1" strokeWidth="1" /><path stroke="#fff" strokeWidth="2" d="M16.500 23l2.500 2.500 4.500-4.500" /></g>
      : <g><rect x="12" y="13" width="11" height="11" fill="#f3f2f1" /><path d="M12 17h11M15.500 13v11M19.500 13v11M12 20.500h11" strokeWidth="1.300" /></g>}
  </svg>
);

/* ---------- charts: coordinates are window coordinates ---------- */
const grid = { stroke: "#7cbcf5", strokeWidth: 1, strokeDasharray: "1 4", fill: "none" };
const legendItems = (items: [number, number, number, string, string][], y: number) =>
  items.map(([cx, x, w, l, c]) => <g key={l}><circle cx={cx} cy={y} r="4" fill={c} /><T x={x} y={y} w={w}>{l}</T></g>);

const YearChart = () => (
  <svg width="336" height="132" viewBox="64 421 336 132">
    <T x={69} y={436.500} w={61.500} b>MissionStatus</T>
    {legendItems([[141, 146.500, 27.500, "Failure", "#12239e"], [182.500, 188, 55, "Partial Failure", "#e66c37"], [252, 257.500, 71, "Prelaunch Failure", "#6b007b"], [337.500, 342.500, 32.500, "Success", "#118dff"]], 436.500)}
    <path {...grid} d="M114.500 457V524M192.500 457V524M270 457V524M348 457V524M106 477.700H394M106 523.700H394" />
    <T x={98} y={477.500} a="end" w={15}>100</T><T x={98} y={523.500} a="end">0</T>
    {[1960, 1980, 2000, 2020].map((v, i) => <T key={v} x={114.500 + i * 77.900} y={532.500} a="middle" w={20}>{String(v)}</T>)}
    <T x={250} y={546} a="middle" f="#252423" w={16}>Year</T>
    <T x={73} y={489} a="middle" f="#252423" s={9.5} w={54} r>Total Missions</T>
    <g transform="translate(0 236) scale(.35714 .33333)" fill="none" strokeLinejoin="round">
      <path vectorEffect="non-scaling-stroke" strokeWidth="2" stroke="#12239e" d="M360 860H800L820 857 840 860 865 857 890 860H960L975 852 985 854 997 861" />
      <path vectorEffect="non-scaling-stroke" strokeWidth="2" stroke="#e66c37" d="M395 860H425M555 860L590 858 600 860 640 858 700 859 H970" />
      <path vectorEffect="non-scaling-stroke" strokeWidth="2" stroke="#118dff" d="M360 861L385 858 408 850 422 853 430 860 550 860 592 850 600 860 645 850 655 854 670 846 690 846 702 852 720 840 735 836 745 842 756 840 766 851 780 838 790 836 810 843 820 829 855 821 865 825 875 824 886 827 900 812 908 801 918 804 930 773 940 768 952 735 964 748 974 727 984 693 995 758" />
    </g>
    <circle cx="332" cy="522.500" r="3.500" fill="#6b007b" />
  </svg>
);

const companies: [string, number, number][] = [["CASC", 677, 23], ["SpaceX", 631, 30.500], ["NASA", 613, 24.500], ["Arianespace", 597, 51], ["ULA", 584.500, 18], ["Northrop", 565, 39]];
const CompanyChart = () => (
  <svg width="336" height="157" viewBox="408 421 336 157">
    <path {...grid} d="M506.500 435V550M653 435V550" />
    {companies.map(([n, e, w], i) => <g key={n}><rect x="506" y={438.500 + i * 17.950} width={e - 506} height="13" fill="#118dff" /><T x={499} y={445.500 + i * 17.950} a="end" w={w}>{n}</T></g>)}
    <T x={506.500} y={558.500} a="middle">0</T><T x={653} y={558.500} a="middle" w={16}>200</T>
    <T x={616} y={571.500} a="middle" f="#252423" s={9.5} w={68}>Success Missions</T>
    <T x={416} y={491} a="middle" f="#252423" s={9.5} w={35} r>Company</T>
    <rect x="734" y="431" width="6" height="119" rx="3" fill="#8cc4fb" /><rect x="733.500" y="431" width="6.500" height="25" rx="3.200" fill="#6c93b8" stroke="#fff" />
  </svg>
);

const rockets: [string, number, boolean?][] = [
  ["Falcon 9 Block 5", 806], ["Ariane 5 ECA", 686], ["Long March 2D", 545], ["Long March 2C", 542], ["Long March 3...", 534], ["Atlas V 401", 527], ["Space Shuttle ...", 527, true], ["Space Shuttle ...", 503, true],
  ["H-IIA 202", 495], ["Rokot/Briz KM", 495, true], ["Pegasus XL", 492], ["Long March 4B", 489], ["Long March 4C", 489], ["Space Shuttle ...", 485, true], ["Falcon 9 Block 3", 473, true], ["Soyuz 2.1a", 473],
  ["Space Shuttle ...", 473, true], ["Electron/Curie", 468], ["PSLV-XL", 468], ["Dnepr", 461, true], ["Titan IIIB", 461, true], ["Vega", 453]];
const rocketW = [67.500, 54, 65, 64, 65, 47, 66.500, 66.500, 40, 60, 46, 63.500, 64, 66.500, 67.500, 45, 66.500, 60, 34, 26, 36, 21];
const RocketChart = () => (
  <svg width="320" height="416" viewBox="757 387 320 416">
    {rockets.map(([n, e, g], i) => (
      <g key={i}><rect x="865" y={404.200 + i * 16.560} width={(e - 375) / 3} height="12.600" fill={g ? "#999" : "#d9b300"} /><T x={858} y={410.800 + i * 16.560} a="end" w={rocketW[i]}>{n}</T></g>
    ))}
    <T x={865.500} y={780.500} a="middle">0</T><T x={995.500} y={780.500} a="middle" w={15.500}>100</T>
    <T x={962} y={795} a="middle" s={11} f="#252423" w={72}>Total Missions</T>
    <T x={768} y={584.500} a="middle" s={11.500} f="#252423" w={34} r>Rocket</T>
    <rect x="1067" y="397" width="6" height="375" fill="#dadada" /><rect x="1067" y="397.500" width="6" height="82" fill="#b0b0b0" /><path d="M1073 397.500h-6.500v82h6.500" fill="none" stroke="#fff" />
  </svg>
);

/* location bubbles: x, y, radius, colour */
const bubbles: [number, number, number, string][] = [
  [186, 730.500, 4.600, "#c8705a"], [147.700, 737.800, 4.500, "#d9b48f"], [222.500, 747, 4, "#d670d6"], [125.700, 742.500, 4, "#4a92c6"], [117.800, 742.800, 4, "#a0e52a"], [131.800, 761.500, 3, "#e0d87a"],
  [115.800, 748.500, 3.500, "#20b8e6"], [112, 752.500, 4, "#d9a520"], [117.800, 755, 4, "#a08020"], [119.500, 757.500, 3.500, "#c84a5a"], [109, 756.500, 3.500, "#3fae6a"], [113, 757.500, 3.500, "#2f8a3a"], [112, 754, 3.500, "#f0903a"],
  [110, 761, 3.500, "#551a6b"], [111, 764, 3.500, "#a070e0"], [112.500, 766, 3.500, "#e8608a"], [108.500, 767.500, 3, "#7a4ab0"], [109, 770.500, 2.800, "#e03a6a"], [111.500, 770.500, 2.500, "#208a6a"], [107.600, 773, 1.800, "#6b2a7b"]];
const LocationChart = () => (
  <svg width="336" height="142" viewBox="64 662 336 142">
    <T x={68.500} y={677.500} w={38.500} b>Location</T>
    {legendItems([[117.300, 122.500, 59.500, "Cosmic Girl, ...", "#118dff"], [190.500, 196, 53.500, "DeBo 3 Bar...", "#12239e"], [258.300, 263.700, 42, "ELA-3, G...", "#e66c37"], [314.600, 320, 45, "ELS, Guia...", "#6b007b"]], 677.500)}
    <path d="M382 672l6.500 5.500-6.500 5.500z" fill="#252423" stroke="#fff" strokeWidth="1.200" />
    <path {...grid} d="M106.600 697V774M219 697V774M331.500 697V774M104 722H389M104 774.300H389" />
    <T x={98} y={721.500} a="end" w={15}>100</T><T x={98} y={774.500} a="end">0</T>
    {["₹ 0T", "₹ 2T", "₹ 4T"].map((v, i) => <T key={v} x={106.600 + i * 112.400} y={783.500} a="middle" w={17.500}>{v}</T>)}
    <T x={246.500} y={797} a="middle" f="#252423" s={9.5} w={55}>Sum of Budget</T>
    <T x={73} y={735} a="middle" f="#252423" s={9.5} w={54} r>Total Missions</T>
    <path d="M369.500 695.500h11.500a6 6.500 0 01-11.500 0z" fill="#b565cc" />
    {bubbles.map(([x, y, r, c], i) => <circle key={i} cx={x} cy={y} r={r} fill={c} />)}
    <circle cx="130.300" cy="773.500" r="1.300" fill="#123" />
  </svg>
);

const arc = (a: number, b: number) => {
  const p = (d: number, r: number) => `${527.500 + r * Math.sin((d * Math.PI) / 180)} ${726.300 - r * Math.cos((d * Math.PI) / 180)}`;
  const big = b - a > 180 ? 1 : 0;
  return `M${p(a, 54)}A54 54 0 ${big} 1 ${p(b, 54)}L${p(b, 32.500)}A32.500 32.500 0 ${big} 0 ${p(a, 32.500)}z`;
};
const DonutChart = () => (
  <svg width="336" height="150" viewBox="408 651 336 150">
    <path d={arc(0, 340.600)} fill="#118dff" /><path d={arc(340.600, 354.300)} fill="#12239e" /><path d={arc(354.300, 359.500)} fill="#e66c37" />
    <path d="M504.500 667H513.500L515.500 672M537 781L538.500 786.500H547.500" fill="none" stroke="#6f8ca8" />
    <T x={457.500} y={667.500} w={44}>0K (3.79%)</T><T x={551} y={786.500} w={49}>1K (94.62%)</T>
    <T x={643} y={687} w={69} b s={11}>MissionStatus</T>
    {([["Success", "#118dff", 36], ["Failure", "#12239e", 31], ["Partial Failure", "#e66c37", 62.500], ["Prelaunch Failure", "#6b007b", 79.500]] as [string, string, number][]).map(([l, c, w], i) => (
      <g key={l}><circle cx="647" cy={704 + i * 20} r="4" fill={c} /><T x={653} y={704.300 + i * 20} w={w} s={11}>{l}</T></g>
    ))}
  </svg>
);

const kpis: { t: string; v: string; w: number; h: number; s?: number; vt: number; clip?: boolean; sh?: boolean }[] = [
  { t: "Sum of budget", v: "₹ 13.96T", w: 192, h: 33, s: 22, vt: 23 },
  { t: "Total\nMissions", v: "1265", w: 122, h: 51, vt: 13.5 },
  { t: "Partial\nFailure\nMissions", v: "19", w: 128, h: 74, vt: 2, clip: true, sh: true },
  { t: "Success\nMissions", v: "1197", w: 111.500, h: 51, vt: 13.5 },
  { t: "Failure\nMissions", v: "48", w: 123, h: 51, vt: 13.5, sh: true },
  { t: "Prelaunch\nFailure\nMissions", v: "1", w: 111, h: 74, vt: 2, clip: true },
  { t: "Total\nRocket", v: "1265", w: 109.500, h: 51, vt: 13.5 },
  { t: "Active_co\nunt", v: "867", w: 118.500, h: 51, vt: 13.5 },
];

export default function App() {
  return (
    <Screen>
      <Global />
      <TitleBar>
        <TitleLeft>
          <QuickIcons>
            <svg width="24" height="24" viewBox="0 0 24 24" fill="none" stroke="#d8d8d8" strokeWidth="1.600"><path d="M2 1.500h20v21H5l-3-3zM6 1.500v9h13v-9M7 22v-7h10v7M11 18v4" /></svg>
            <svg width="24" height="24" viewBox="0 0 24 24" fill="none" stroke="#797775" strokeWidth="1.700"><path d="M3 1v8.500h8M3 9q6-8 12-7 7 2 6 9-1 4-11 12" /></svg>
            <svg width="24" height="24" viewBox="0 0 24 24" fill="none" stroke="#797775" strokeWidth="1.700"><path d="M21 1v8.500h-8M21 9q-6-8-12-7-7 2-6 9 1 4 11 12" /></svg>
          </QuickIcons>
          <TitleText>s • Last saved: Today at 4:07 PM</TitleText>
          <svg width="30" height="12" viewBox="0 0 30 12"><path d="M9 1h13l-6.500 7z" fill="#fff" /></svg>
        </TitleLeft>
        <TitleSearch><Lens /><span>Search</span></TitleSearch>
        <TitleRight>
          <SignIn>Sign in</SignIn>
          <svg width="30" height="30" viewBox="0 0 30 30"><circle cx="15" cy="15" r="15" fill="#f3f2f1" /><g fill="none" stroke="#111" strokeWidth="2"><circle cx="15" cy="8.500" r="4.300" /><path d="M7 16h16q1 0 1 1-1 8-9 8t-9-8q0-1 1-1z" /></g></svg>
          <WinButtons>
            <svg width="16" height="16" viewBox="0 0 16 16" stroke="#fff" strokeWidth="1.500"><path d="M0 7h16" /></svg>
            <svg width="16" height="16" viewBox="0 0 16 16" fill="none" stroke="#fff" strokeWidth="1.400"><rect x="1" y="3.500" width="11.500" height="11.500" rx="2" /><path d="M4 1h7q4 0 4 4v7" /></svg>
            <svg width="16" height="16" viewBox="0 0 16 16" stroke="#fff" strokeWidth="1.500"><path d="M0 0l16 16M16 0L0 16" /></svg>
          </WinButtons>
        </TitleRight>
      </TitleBar>

      <Tabs>
        <Tab $w={98}>File</Tab><Tab $w={104} $on><span>Home</span></Tab><Tab $w={98}>Insert</Tab><Tab $w={138}>Modeling</Tab><Tab $w={90}>View</Tab>
        <Tab $w={132}>Optimize</Tab><Tab $w={90}>Help</Tab><Tab $w={113} $ctx>Format</Tab><Tab $w={149} $ctx $gap={6}>Data / Drill</Tab>
        <ShareButton>
          <svg width="26" height="24" viewBox="0 0 26 24" fill="none" stroke="#fff" strokeWidth="1.700"><path d="M1.500 6v15h17v-5" /><path d="M16 2l8 7-8 6v-4Q9 11 5 16 6 6 16 5z" /></svg>
          <span>Share</span>
          <svg width="16" height="12" viewBox="0 0 16 12" fill="none" stroke="#fff" strokeWidth="1.800"><path d="M1 2.500l7 7 7-7" /></svg>
        </ShareButton>
      </Tabs>
      <RibbonBar>
        <Group $w={240}>
          <Items $pl={2}>
            <Big $w={79} $off>{icons.paste}<span>Paste</span></Big>
            <ClipActions>
              <ClipAction><svg width="24" height="26" viewBox="0 0 24 26" fill="none" stroke={DK} strokeWidth="1.500"><path d="M7 1l7 17M14 1L7 18" /><circle cx="6" cy="21" r="3" stroke="#1e88cf" strokeWidth="2" /><circle cx="15" cy="21" r="3" stroke="#1e88cf" strokeWidth="2" /></svg>Cut</ClipAction>
              <ClipAction><svg width="24" height="26" viewBox="0 0 24 26" fill="none" stroke={DK} strokeWidth="1.600"><path d="M8 21H1V1h9l2 2" /><path fill="#fff" d="M8 5h9l6 6v13H8zM17 5v6h6M12 15h7M12 19h7" /></svg>Copy</ClipAction>
              <ClipAction><svg width="24" height="26" viewBox="0 0 24 26" fill="none" strokeWidth="1.700"><path stroke="#d96c00" fill="#fff" d="M1 11l7-3 8 8-3 7z" /><path stroke="#d96c00" fill="#ffc36b" d="M5 16l8 1 1 2-3 5z" /><path stroke={DK} fill="#fafafa" d="M8 8l3-3 3 3 6-6q3-1 3 2l-6 6 3 3-4 3z" /></svg>Format painter</ClipAction>
            </ClipActions>
          </Items>
          <GroupName>Clipboard</GroupName>
        </Group>
        {ribbon.map(g => (
          <Group key={g.name} $w={g.w}>
            <Items $pl={g.pl}>
              {g.items.map(([ic, w, a, b, ch]) => (
                <Big key={ic} $w={w} $off={ic === "sens"}>{icons[ic]}<span>{a}</span><Line2>{b}{ch && <ChevS c={ic === "sens" ? "#a19f9d" : DK} />}</Line2></Big>
              ))}
            </Items>
            <GroupName>{g.name}</GroupName>
          </Group>
        ))}
        <Collapse><svg width="12" height="10" viewBox="0 0 12 10" fill="none" stroke={DK} strokeWidth="2.600"><path d="M1 7.500l5-5 5 5" /></svg></Collapse>
      </RibbonBar>

      <Work>
        <Rail>
          <RailItem $on><svg width="22" height="22" viewBox="0 0 22 22" fill="none" stroke="#252423" strokeWidth="1.600"><path d="M1 0v21h21M5 5h3v12H5zM11 9h3v8h-3zM17 2h3v15h-3z" /></svg></RailItem>
          <RailItem><svg width="24" height="24" viewBox="0 0 24 24" fill="none" stroke="#797775" strokeWidth="1.500"><path d="M1 1h22v22H1zM1 5h22M1 11h22M1 17h22M8 5v18M16 5v18" /></svg></RailItem>
          <RailItem><svg width="28" height="28" viewBox="0 0 28 28" fill="none" stroke="#797775" strokeWidth="1.600"><path d="M1 9h10v11H1zM1 13h10M16 1h11v11H16zM16 5h11M16 17h11v10H16zM16 21h11M6 9V5h10M6 20v4h10" /></svg></RailItem>
        </Rail>
        <Center>
          <CanvasRow>
            <Canvas>
              <ReportPage>
                <KpiRow>
                  {kpis.map((k, i) => (
                    <KpiCard key={i} $w={k.w} $sh={k.sh}>
                      <KpiTitle $h={k.h} $s={k.s} $sh={k.sh}>{k.t}</KpiTitle>
                      <KpiValue $t={k.vt} $clip={k.clip}>{k.v}</KpiValue>
                    </KpiCard>
                  ))}
                </KpiRow>
                <Board>
                  <Column $w={336} $pt={6} $gap={19}>
                    <Visual $h={194}><VisualTitle $h={61}>{"Total Missions by Year and\nMissionStatus"}</VisualTitle><YearChart /></Visual>
                    <Visual $h={231}><VisualTitle $h={89}>{"Sum of Budget, Total\nMissions and Success\nMissions by Location"}</VisualTitle><LocationChart /></Visual>
                  </Column>
                  <Column $w={336} $ml={8} $pt={6} $gap={10}>
                    <Visual $h={219} $sel>
                      <VisualTitle $h={61}>{"Success Missions by\nCompany"}</VisualTitle><CompanyChart />
                      <Corner $r={0} $x="left:-1px" $y="top:-1px" /><Corner $r={90} $x="right:-1px" $y="top:-1px" /><Corner $r={180} $x="right:-1px" $y="bottom:-1px" /><Corner $r={270} $x="left:-1px" $y="bottom:-1px" />
                      <Handle $x="left:159px" $y="top:-1px" $w={18} $h={5} /><Handle $x="left:159px" $y="bottom:-1px" $w={18} $h={5} />
                      <Handle $x="left:-1px" $y="top:101px" $w={5} $h={18} /><Handle $x="right:-1px" $y="top:101px" $w={5} $h={18} />
                    </Visual>
                    <Visual $h={212}><VisualTitle $h={62}>{"Total Missions by\nMissionStatus"}</VisualTitle><DonutChart /></Visual>
                  </Column>
                  <Column $w={320} $ml={13}>
                    <Visual $h={450} $gray><VisualTitle $h={33}>Total Missions by Rocket</VisualTitle><RocketChart /></Visual>
                  </Column>
                </Board>
              </ReportPage>
              <HoverBar>
                <HoverButton><svg width="26" height="24" viewBox="0 0 26 24" fill="none" stroke="#605e5c" strokeWidth="1.500"><path d="M1 2h24v2l-9 9v9h-5v-9L1 4z" /></svg></HoverButton>
                <HoverButton><svg width="22" height="20" viewBox="0 0 22 20" fill="none" stroke="#605e5c" strokeWidth="1.500"><path d="M10 1.500H1v17h20v-7M1 11h9v7.500M11 10l9-8.500M14 1.500h7V8" /></svg></HoverButton>
                <HoverButton><svg width="24" height="6" viewBox="0 0 24 6" fill="#605e5c"><circle cx="3" cy="3" r="1.800" /><circle cx="12" cy="3" r="1.800" /><circle cx="21" cy="3" r="1.800" /></svg></HoverButton>
              </HoverBar>
            </Canvas>
            <Filters>
              <FiltersHead>
                <svg width="26" height="24" viewBox="0 0 26 24" fill="none" stroke="#252423" strokeWidth="2"><path d="M1.500 2h23v1.500L16 13v9h-6v-9L1.500 3.500z" /></svg>
                <span>Filters</span>
                <Push>
                  <svg width="20" height="20" viewBox="0 0 20 20" fill="none" stroke="#252423" strokeWidth="1.700"><path d="M1 10q2-5.500 9-5.500t9 5.500" /><circle cx="10" cy="10.500" r="3" /></svg>
                  <Collapse2 />
                </Push>
              </FiltersHead>
              <FilterSearch $w={270} $h={46}><Lens /><span>Search</span></FilterSearch>
              <FilterBody>
                <FilterList>
                  <FilterName $t={25}>Filters on this visual<Dots3 /></FilterName>
                  <FilterCard>{"Company\nis (All)"}</FilterCard>
                  <FilterCard>{"Success Missions\nis (All)"}</FilterCard>
                  <FilterCard $center>Add data fields here</FilterCard>
                  <FilterName $t={31}>Filters on this page<Dots3 /></FilterName>
                  <FilterCard $center>Add data fields here</FilterCard>
                  <FilterName $t={31}>Filters on all pages<Dots3 /></FilterName>
                  <FilterCard $center>Add data fields here</FilterCard>
                </FilterList>
                <VScroll $h={507} $mt={12} />
              </FilterBody>
            </Filters>
          </CanvasRow>
          <PageTabs>
            <ViewToggle $w={65} $gap={8}><svg width="29" height="24" viewBox="0 0 30 26" fill="none" stroke="#484644" strokeWidth="2"><path d="M1 1h28v18H1zM15 19v5M10 24.500h10" /></svg><Underline $on /></ViewToggle>
            <ViewToggle $w={66} $gap={4}><svg width="20" height="32" viewBox="0 0 20 32" fill="none" stroke="#484644" strokeWidth="2"><rect x="1" y="1" width="18" height="29" rx="1.500" /><path d="M8 26h4" /></svg><Underline /></ViewToggle>
            <svg width="61" height="52" viewBox="192 920 61 52" fill="#c0bebc"><path d="M208.500 940v13l-7-6.500zM235 940v13l7-6.500z" /></svg>
            <PageTab>Page 1</PageTab>
            <AddPage><svg width="18" height="18" viewBox="0 0 18 18" stroke="#fff" strokeWidth="4.500"><path d="M9 1v16M1 9h16" /></svg></AddPage>
          </PageTabs>
        </Center>
        <Viz>
          <VizHead><span>Visualizations</span><Collapse2 /></VizHead>
          <BuildVisual>Build visual</BuildVisual>
          <VizModes>
            <VizMode $on><svg width="38" height="38" viewBox="0 0 38 38"><path d="M1 2h30" stroke="#252423" strokeWidth="2" /><g fill={GREEN} stroke="#252423" strokeWidth="1.800" strokeDasharray="4 2"><rect x="1.500" y="9.500" width="35" height="11" /><rect x="1.500" y="26" width="35" height="11" /></g></svg></VizMode>
            <VizMode><svg width="36" height="38" viewBox="0 0 36 38" fill="none" stroke="#252423" strokeWidth="1.800"><path d="M2 29V14h9v14M11 20V2h10v18M21 9h10" /><path fill="#f3f2f1" d="M33 13q-2-1-4 2L16 27l4 4 12-14q2-3 1-4zM16 27q-4 0-4 4-1 3-5 3 6 3 10 1 4-2 3-5z" /></svg></VizMode>
            <VizMode><svg width="38" height="38" viewBox="0 0 38 38" fill="none" stroke="#252423" strokeWidth="1.800"><circle cx="16" cy="16" r="14.500" /><path d="M2 19l8-6 6 4L28 7M8 20v7M13 22v8M18 20v10M23 17v9" /><path strokeWidth="4" d="M27 27l9 9" /></svg></VizMode>
          </VizModes>
          <svg width="270" height="22" viewBox="1379 373 270 22" fill="none" stroke="#8a8886" strokeWidth="1.500"><path d="M1379 393H1403L1415 381.500 1427 393H1649" /></svg>
          <VizGrid>
            {gallery.map((g, i) => <VizCell key={i} $on={i === 0}><svg width="28" height="28" viewBox="0 0 28 28" fill="none" stroke={DK} strokeWidth="1.500" overflow="visible">{g}</svg></VizCell>)}
          </VizGrid>
          <Wells>
            <WellList>
              <WellName>Y-axis</WellName><Well><Chip><span>Company</span><ChipGlyphs /></Chip></Well>
              <WellName>X-axis</WellName><Well><Chip><span>Success Missions</span><ChipGlyphs /></Chip></Well>
              <WellName>Legend</WellName><Well />
            </WellList>
            <VScroll $h={100} $mt={3} />
          </Wells>
        </Viz>
        <Data>
          <DataHead><span>Data</span><Collapse2 /></DataHead>
          <DataSearch $w={258} $h={39}><Lens s={22} c="#605e5c" /><span>Search</span></DataSearch>
          {(["all_measures", "Date Table", "space_missions"]).map((n, i) => (
            <DataRow key={n}>
              <svg width="10" height="18" viewBox="0 0 10 18" fill="none" stroke="#605e5c" strokeWidth="1.500"><path d="M1 1l8 8-8 8" /></svg>
              <TableGlyph kind={i === 1 ? "calendar" : "check"} /><span>{n}</span>
            </DataRow>
          ))}
        </Data>
      </Work>

      <Status>
        <span>Page 1 of 1</span>
        <ZoomArea>
          <svg width="186" height="20" viewBox="1313 980 186 20" stroke="#605e5c" fill="none"><path strokeWidth="1.500" d="M1328 990H1478M1403 986.500v7" /><path strokeWidth="6" d="M1364 981.500v17" /><path strokeWidth="2.200" d="M1315 991h6M1486.500 990h12M1492.500 984v12" /></svg>
          <Percent>53%</Percent>
          <svg width="24" height="18" viewBox="0 0 24 18" fill="none" stroke="#605e5c" strokeWidth="2"><rect x="1" y="1" width="22" height="16" /><path strokeWidth="1.600" d="M4.500 7V4H8M16 4h3.500v3M19.500 11v3H16M8 14H4.500v-3" /></svg>
        </ZoomArea>
        <Update>Update available (click to download)</Update>
      </Status>

      <TaskBar>
        <Weather>
          <svg width="54" height="46" viewBox="0 0 54 46"><defs><linearGradient id="sun" x2="0" y2="1"><stop offset="0" stopColor="#ffc928" /><stop offset="1" stopColor="#f07a1a" /></linearGradient></defs><circle cx="21" cy="26" r="16" fill="url(#sun)" /><path stroke="#ffe3a8" strokeWidth="3" strokeLinecap="round" d="M6 22h16M4 29h24M6 35h20" opacity=".8" /><rect x="16" y="-3" width="35" height="25" rx="12" fill="#2f2f33" /><text x="34" y="14.500" textAnchor="middle" fontSize="15" fill="#fff" fontFamily="Open Sans" textLength="29" lengthAdjust="spacingAndGlyphs">101°</text></svg>
        </Weather>
        <svg width="35" height="36" viewBox="0 0 35 36"><defs><linearGradient id="win" x2="1" y2="1"><stop offset="0" stopColor="#7fe6ff" /><stop offset="1" stopColor="#0a8bf0" /></linearGradient></defs><path fill="url(#win)" d="M0 2q0-1 1-1h15.500v16.500H0zM18 1h16q1 0 1 1v15.500H18zM0 19h16.500v16.500H1q-1 0-1-1zM18 19h17v15.500q0 1-1 1H18z" /></svg>
        <TaskSearch>
          <svg width="23" height="24" viewBox="0 0 23 24" fill="none" stroke="#e6e6ea" strokeWidth="2.200"><circle cx="10" cy="10" r="8.500" /><path d="M16 16l6 7" /></svg>
          <span>Search</span>
          <svg width="64" height="34" viewBox="0 0 64 34"><path d="M3 5q9 3 11 19l-4 1Q1 15 3 5z" fill="#a9cfe6" /><path d="M12 24l4 7" stroke="#d98c4a" strokeWidth="4" strokeLinecap="round" /><path d="M22 24l-3-9q-1-7 6-8 5-7 11-1 7 0 7 7-1 4-4 6l-1 7q-8 3-16-2z" fill="#e6d3ea" /><path d="M22 20q8 4 16 2" stroke="#b79cc4" fill="none" /><path d="M54 20q-3-8 2-12t7 1-9 13z" fill="none" stroke="#c9cdd2" strokeWidth="1.400" /><path d="M54 20l8-13M54 21l-7 10" stroke="#c9cdd2" strokeWidth="1.400" /><path d="M50 26l-4 6" stroke="#7fd0c0" strokeWidth="3" strokeLinecap="round" /></svg>
        </TaskSearch>
        <TaskIcon><svg width="36" height="34" viewBox="0 0 36 34"><rect x="13" y="1" width="23" height="24" rx="1" fill="#f0f0f0" /><rect x="0" y="10" width="26" height="23" rx="1" fill="#777" opacity=".85" /><path d="M13 10h13v15H13z" fill="#a8a8a8" /></svg></TaskIcon>
        <TaskIcon><svg width="36" height="36" viewBox="0 0 36 36"><defs><linearGradient id="chat" x2="0" y2="1"><stop offset="0" stopColor="#8f7ad6" /><stop offset="1" stopColor="#5059c9" /></linearGradient></defs><path fill="url(#chat)" d="M18 1a17 17 0 11-4 33.500L2 35l1-9A17 17 0 0118 1z" /><rect x="9" y="12" width="14" height="13" rx="2" fill="#fff" /><path fill="#fff" d="M24 16l4-3v11l-4-3z" /></svg></TaskIcon>
        <TaskIcon $run><svg width="37" height="34" viewBox="0 0 37 34"><path fill="#e8a80c" d="M0 2q0-2 2-2h10l4 4v6H0z" /><path fill="#ffd04f" d="M0 6h34q3 0 3 3v21q0 3-3 3H3q-3 0-3-3z" /><path fill="#1583d6" d="M6 33v-8q0-4 4-4h16q4 0 4 4v8z" /><path stroke="#0a5ba6" strokeWidth="2" d="M12 28h13" /></svg></TaskIcon>
        <TaskIcon $run><svg width="32" height="38" viewBox="0 0 32 38"><path fill="#f83b1d" d="M9 1h14l3 4 3 1 2 6-3 16q-3 5-12 9Q7 33 4 28L1 12l2-6 3-1z" /><path fill="#fff" d="M16 7l7-1 4 7-3 6 1 3-5 4-4 5-4-5-5-4 1-3-3-6 4-7z" /><path fill="#f83b1d" d="M9 12.500l5 2v2l-4-1zM23 12.500l-5 2v2l4-1zM15 15h2l1 6-2 1.500-2-1.500zM12 24l4-1.500 4 1.500-4 3z" /></svg></TaskIcon>
        <TaskIcon><svg width="36" height="36" viewBox="0 0 36 36"><defs><linearGradient id="e1" x2="1"><stop offset="0" stopColor="#25a7e8" /><stop offset="1" stopColor="#5fe07a" /></linearGradient></defs><circle cx="18" cy="18" r="17.500" fill="#1177d1" /><path fill="url(#e1)" d="M1 15Q4 1 18 .5 34 1 35.500 16q0 8-9 8-6 0-4-4 1-8-7-9-9 0-14 5z" /><path fill="#0c4f9e" d="M12 17q-3 12 9 15 7 1 11-4-5 8-14 7.500-9-1-9-11 0-5 3-7.500z" /><path fill="#1f2228" d="M16 17q-2 4 1 7 7 5 16 1l2-1-1 4q-8 3-14 0-7-5-4-11z" opacity=".9" /></svg></TaskIcon>
        <TaskIcon><svg width="36" height="36" viewBox="0 0 36 36"><path d="M10 9V2h16v7" fill="none" stroke="#3fb0f0" strokeWidth="2.400" /><rect x="0" y="6" width="36" height="29" rx="4" fill="#f1f1f1" /><path fill="#f25022" d="M10 12h7.500v7.500H10z" /><path fill="#7fba00" d="M18.500 12H26v7.500h-7.500z" /><path fill="#00a4ef" d="M10 20.500h7.500V28H10z" /><path fill="#ffb900" d="M18.500 20.500H26V28h-7.500z" /></svg></TaskIcon>
        <TaskIcon $run><svg width="36" height="36" viewBox="0 0 36 36"><circle cx="18" cy="18" r="17.500" fill="#1ed760" /><g fill="none" stroke="#111" strokeLinecap="round"><path strokeWidth="3.600" d="M8 12.500q11-3 21 2.500" /><path strokeWidth="3" d="M9 18.500q9-2.500 18 2.500" /><path strokeWidth="2.500" d="M10 24.500q8-2 14.500 2" /></g></svg></TaskIcon>
        <TaskIcon $run><svg width="62" height="52" viewBox="0 0 62 52" overflow="visible"><path fill="none" stroke="#25d366" strokeWidth="3" d="M16 42l2-8a16 16 0 115 5.500z" /><path fill="#25d366" d="M24 19q3-2 4 1l1 4-2 2q3 5 7 6l2-2 5 2q1 4-4 5-13-1-15-15 0-2 2-3z" /><rect x="29" y="0" width="30" height="25" rx="12.500" fill="#4cc2ff" /><text x="44" y="18" textAnchor="middle" fontSize="15.500" fill="#111" fontFamily="Open Sans">54</text></svg></TaskIcon>
        <TaskIcon $run><svg width="36" height="36" viewBox="0 0 36 36"><path fill="#0a72c0" d="M26 0l9 4v28l-9 4L2 13l3-3z" /><path fill="#1f8fdc" d="M26 0v36L35 32V4z" opacity=".9" /><path fill="#1585d0" d="M2 23l3 3L26 9.500V0z" /><path fill="#1c222a" d="M26 10v16L15 18z" /></svg></TaskIcon>
        <TaskIcon $on><svg width="28" height="36" viewBox="0 0 28 36"><rect x="15" y="0" width="13" height="36" rx="1.500" fill="#dba012" /><rect x="8" y="9" width="12" height="27" rx="1.500" fill="#f2c43c" /><rect x="0" y="18" width="12" height="18" rx="1.500" fill="#fbe07a" /></svg></TaskIcon>
        <Tray>
          <svg width="16" height="10" viewBox="0 0 16 10" fill="none" stroke="#fff" strokeWidth="2"><path d="M1 9l7-7.500L15 9" /></svg>
          <svg width="54" height="22" viewBox="0 0 54 22"><path fill="#9a9a9a" d="M34 4q6-5 12 2l5 4-7 8-9-8z" /><path fill="#f2f2f2" d="M34 20q-5-1-5-6 1-5 6-4 4-4 8-1l8 5q2 5-3 6z" /></svg>
          <Lang>ENG<br />IN</Lang>
          <svg width="24" height="22" viewBox="0 0 24 22" fill="none" stroke="#fff" strokeWidth="1.800"><path d="M1 8q11-10 22 0M4.500 12q7.500-7 15 0M8 16q4-3.500 8 0" /><circle cx="12" cy="18.500" r="1.600" fill="#fff" /></svg>
          <svg width="36" height="22" viewBox="-12 0 36 22" fill="none" stroke="#fff" strokeWidth="1.700"><path d="M1 8h4l6-5v16l-6-5H1zM14 8q2 3 0 6M17 5q4 6 0 12M20 2.500q6 8.500 0 17" /></svg>
          <svg width="36" height="20" viewBox="-12 0 36 20" fill="none" stroke="#fff" strokeWidth="1.700"><rect x="1" y="2.500" width="19" height="15" rx="3.500" /><path d="M22.500 8v4" strokeWidth="2.500" /><rect x="4" y="5.500" width="6" height="9" fill="#fff" stroke="none" /></svg>
          <Clock>16:10<br />20-06-2024</Clock>
          <svg width="46" height="26" viewBox="-13 0 46 26" fill="#8fe6ff"><path d="M10 1q7 0 7.500 8l1 8 1.500 3H0l1.500-3 1-8Q3 1 10 1zM7 22h6q-1 3-3 3t-3-3z" /></svg>
          <svg width="78" height="38" viewBox="-12 0 78 38"><defs><linearGradient id="cp" x2="0" y2="1"><stop offset="0" stopColor="#1f8fe8" /><stop offset=".5" stopColor="#35b8a0" /><stop offset="1" stopColor="#f2c230" /></linearGradient><linearGradient id="cq" x2="0" y2="1"><stop offset="0" stopColor="#3a50e0" /><stop offset=".5" stopColor="#b060e8" /><stop offset="1" stopColor="#f0608a" /></linearGradient></defs><path fill="url(#cq)" d="M14 2h8q5 0 6 6h2q6 1 5 7l-3 12q-2 5-7 5H12q4-2 5-7l3-12q0-8-6-11z" /><path fill="url(#cp)" d="M8 2h14q-4 2-5 8l-3 12q-2 7-7 7-8 0-6-8l3-13q1-5 4-6z" /><rect x="9" y="25" width="28" height="12" rx="3" fill="#ffc400" /><text x="23" y="35" textAnchor="middle" fontSize="10.500" fontWeight="700" fill="#111" fontFamily="Open Sans" textLength="20">PRE</text></svg>
        </Tray>
      </TaskBar>
    </Screen>
  );
}
